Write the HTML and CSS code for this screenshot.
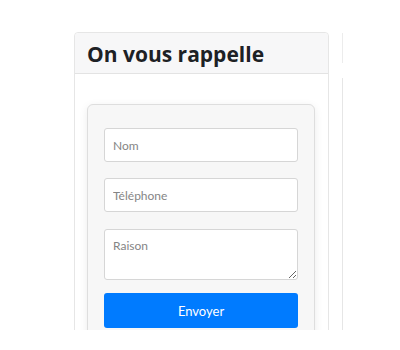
FILE: index.html
```html
<!DOCTYPE html>
<html lang="fr">
  <head>
    <meta charset="utf-8" />
    <title>On vous rappelle</title>
    <link rel="stylesheet" href="styles.css">
  </head>
  <body>
    <div class="page">
      <div class="card">
        <div class="card-header">
          <h2>On vous rappelle</h2>
        </div>
        <div class="card-body">
          <form class="callback-form">
            <input type="text" placeholder="Nom" />
            <input type="tel" placeholder="Téléphone" />
            <textarea placeholder="Raison"></textarea>
            <button type="button">Envoyer</button>
          </form>
        </div>
      </div>
      <div class="side">
        <div class="side-top"></div>
        <div class="side-body"></div>
      </div>
    </div>
  </body>
</html>
```

FILE: styles.css
```css
* {
  box-sizing: border-box;
}

html,
body {
  margin: 0;
  padding: 0;
  background: #fff;
}

body {
  font-family: Lato, "Open Sans", sans-serif;
  color: #212529;
}

.page {
  display: flex;
  gap: 13px;
  padding: 32px 0 0 74px;
  height: 330px;
  overflow: hidden;
}

.card {
  width: 255px;
  flex: none;
  border: 1px solid #e6e6e6;
  border-radius: 4px;
  background: #fff;
  height: 320px;
}
.card-header {
  height: 41px;
  background: #f7f7f8;
  border-bottom: 1px solid #e3e3e3;
  padding: 0 12px;
  border-radius: 4px 4px 0 0;
}
.card-header h2 {
  margin: 0;
  font-family: "Open Sans", sans-serif;
  font-size: 21px;
  font-weight: 700;
  line-height: 42px;
  color: #1d2125;
}
.card-body {
  padding: 30px 13px 0 12px;
}

.callback-form {
  display: flex;
  flex-direction: column;
  gap: 16px;
  background: #f7f7f7;
  border: 1px solid #dedede;
  border-radius: 6px;
  box-shadow: 0 2px 8px rgba(0, 0, 0, 0.08);
  padding: 23px 16px 20px;
  height: 260px;
}
.callback-form input,
.callback-form textarea {
  width: 100%;
  border: 1px solid #d6d6d6;
  border-radius: 3px;
  background: #fff;
  font-family: inherit;
  font-size: 12px;
  padding: 0 8px;
  color: #333;
}
.callback-form input {
  height: 34px;
}
.callback-form textarea {
  height: 51px;
  margin-top: 1px;
  padding-top: 8px;
  resize: vertical;
}
.callback-form ::placeholder {
  color: #858585;
}
.callback-form button {
  height: 35px;
  border: none;
  border-radius: 3px;
  background: #007bff;
  color: #fff;
  font-family: inherit;
  font-size: 13px;
  margin-top: -3px;
}

.side {
  display: flex;
  flex-direction: column;
  gap: 15px;
  width: 20px;
  padding-top: 1px;
}
.side-top {
  height: 30px;
  border-left: 1px solid #ececec;
}
.side-body {
  flex: 1;
  border-left: 1px solid #e6e6e6;
}
```
